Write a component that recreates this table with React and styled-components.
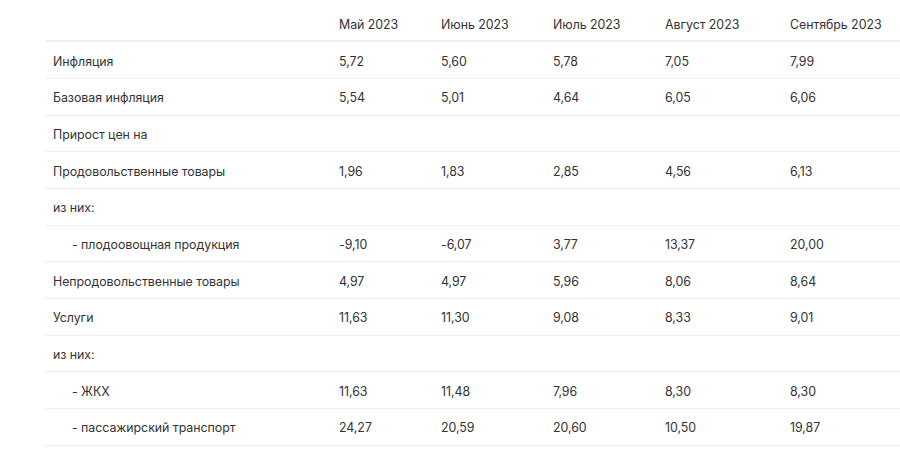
import React from "react";
import styled, { createGlobalStyle } from "styled-components";

const Global = createGlobalStyle`
  html, body { margin: 0; padding: 0; background: #ffffff; }
  body { font-family: Inter, "Noto Sans", sans-serif; }
`;

const Page = styled.div`
  width: 900px;
  height: 451px;
  padding-left: 45px;
  box-sizing: border-box;
  overflow: hidden;
`;

const Row = styled.div`
  display: grid;
  grid-template-columns: 286px 102px 112px 112px 125px 118px;
  align-items: center;
  box-sizing: border-box;
  height: ${(p) => (p.$head ? "42.3px" : "36.67px")};
  border-bottom: ${(p) => (p.$head ? "2px solid #efefef" : "1px solid #eeeeee")};
  color: #333333;
  font-size: 12.4px;
  letter-spacing: -0.05px;
`;

const Cell = styled.div`
  padding-left: ${(p) => (p.$indent ? "27px" : "8px")};
  padding-top: ${(p) => (p.$head ? "9px" : "2px")};
  white-space: nowrap;
`;

const months = ["Май 2023", "Июнь 2023", "Июль 2023", "Август 2023", "Сентябрь 2023"];

const rows = [
  { label: "Инфляция", v: ["5,72", "5,60", "5,78", "7,05", "7,99"] },
  { label: "Базовая инфляция", v: ["5,54", "5,01", "4,64", "6,05", "6,06"] },
  { label: "Прирост цен на", v: [] },
  { label: "Продовольственные товары", v: ["1,96", "1,83", "2,85", "4,56", "6,13"] },
  { label: "из них:", v: [] },
  { label: "- плодоовощная продукция", indent: true, v: ["-9,10", "-6,07", "3,77", "13,37", "20,00"] },
  { label: "Непродовольственные товары", v: ["4,97", "4,97", "5,96", "8,06", "8,64"] },
  { label: "Услуги", v: ["11,63", "11,30", "9,08", "8,33", "9,01"] },
  { label: "из них:", v: [] },
  { label: "- ЖКХ", indent: true, v: ["11,63", "11,48", "7,96", "8,30", "8,30"] },
  { label: "- пассажирский транспорт", indent: true, v: ["24,27", "20,59", "20,60", "10,50", "19,87"] },
];

export default function App() {
  return (
    <>
      <Global />
      <Page>
        <Row $head>
          <Cell $head />
          {months.map((m) => (
            <Cell $head key={m}>{m}</Cell>
          ))}
        </Row>
        {rows.map((r, i) => (
          <Row key={i}>
            <Cell $indent={r.indent}>{r.label}</Cell>
            {[0, 1, 2, 3, 4].map((j) => (
              <Cell key={j}>{r.v[j] || ""}</Cell>
            ))}
          </Row>
        ))}
      </Page>
    </>
  );
}
